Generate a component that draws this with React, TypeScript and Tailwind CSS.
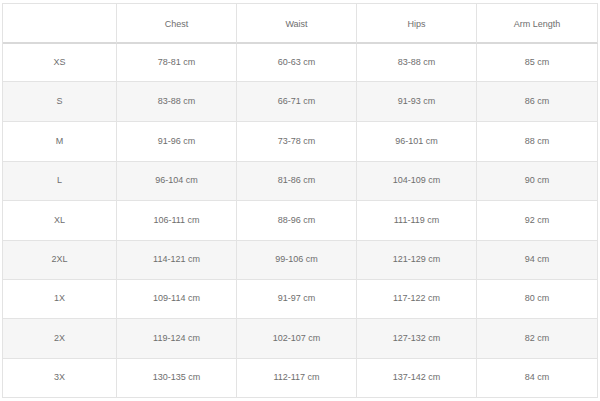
const headers = ["", "Chest", "Waist", "Hips", "Arm Length"];

const rows = [
  { size: "XS", cells: ["78-81 cm", "60-63 cm", "83-88 cm", "85 cm"], h: "h-[38px]" },
  { size: "S", cells: ["83-88 cm", "66-71 cm", "91-93 cm", "86 cm"], h: "h-[40px]" },
  { size: "M", cells: ["91-96 cm", "73-78 cm", "96-101 cm", "88 cm"], h: "h-[40px]" },
  { size: "L", cells: ["96-104 cm", "81-86 cm", "104-109 cm", "90 cm"], h: "h-[39px]" },
  { size: "XL", cells: ["106-111 cm", "88-96 cm", "111-119 cm", "92 cm"], h: "h-[40px]" },
  { size: "2XL", cells: ["114-121 cm", "99-106 cm", "121-129 cm", "94 cm"], h: "h-[39px]" },
  { size: "1X", cells: ["109-114 cm", "91-97 cm", "117-122 cm", "80 cm"], h: "h-[39px]" },
  { size: "2X", cells: ["119-124 cm", "102-107 cm", "127-132 cm", "82 cm"], h: "h-[40px]" },
  { size: "3X", cells: ["130-135 cm", "112-117 cm", "137-142 cm", "84 cm"], h: "h-[39px]" },
];

export default function App() {
  return (
    <div className="h-[401px] w-[600px] bg-white pl-[2px] pt-[3px] font-['Liberation_Sans',Arial,sans-serif] text-[9px] text-[#6e6e6e]">
      <div className="grid w-[596px] grid-cols-[114px_120px_120px_120px_121px] border-l border-t border-[#e3e3e3]">
        {/* Header */}
        {headers.map((label, i) => (
          <div
            key={`h${i}`}
            className="flex h-[40px] items-center justify-center border-b-2 border-r border-b-[#d9d9d9] border-r-[#e3e3e3] pt-[4px]"
          >
            {label}
          </div>
        ))}

        {rows.map((row, r) => {
          const bg = r % 2 === 1 ? "bg-[#f6f6f6]" : "bg-white";
          return [row.size, ...row.cells].map((value, c) => (
            <div
              key={`${r}-${c}`}
              className={`flex ${row.h} items-center justify-center border-b border-r border-[#e3e3e3] ${bg}`}
            >
              {value}
            </div>
          ));
        })}
      </div>
    </div>
  );
}
